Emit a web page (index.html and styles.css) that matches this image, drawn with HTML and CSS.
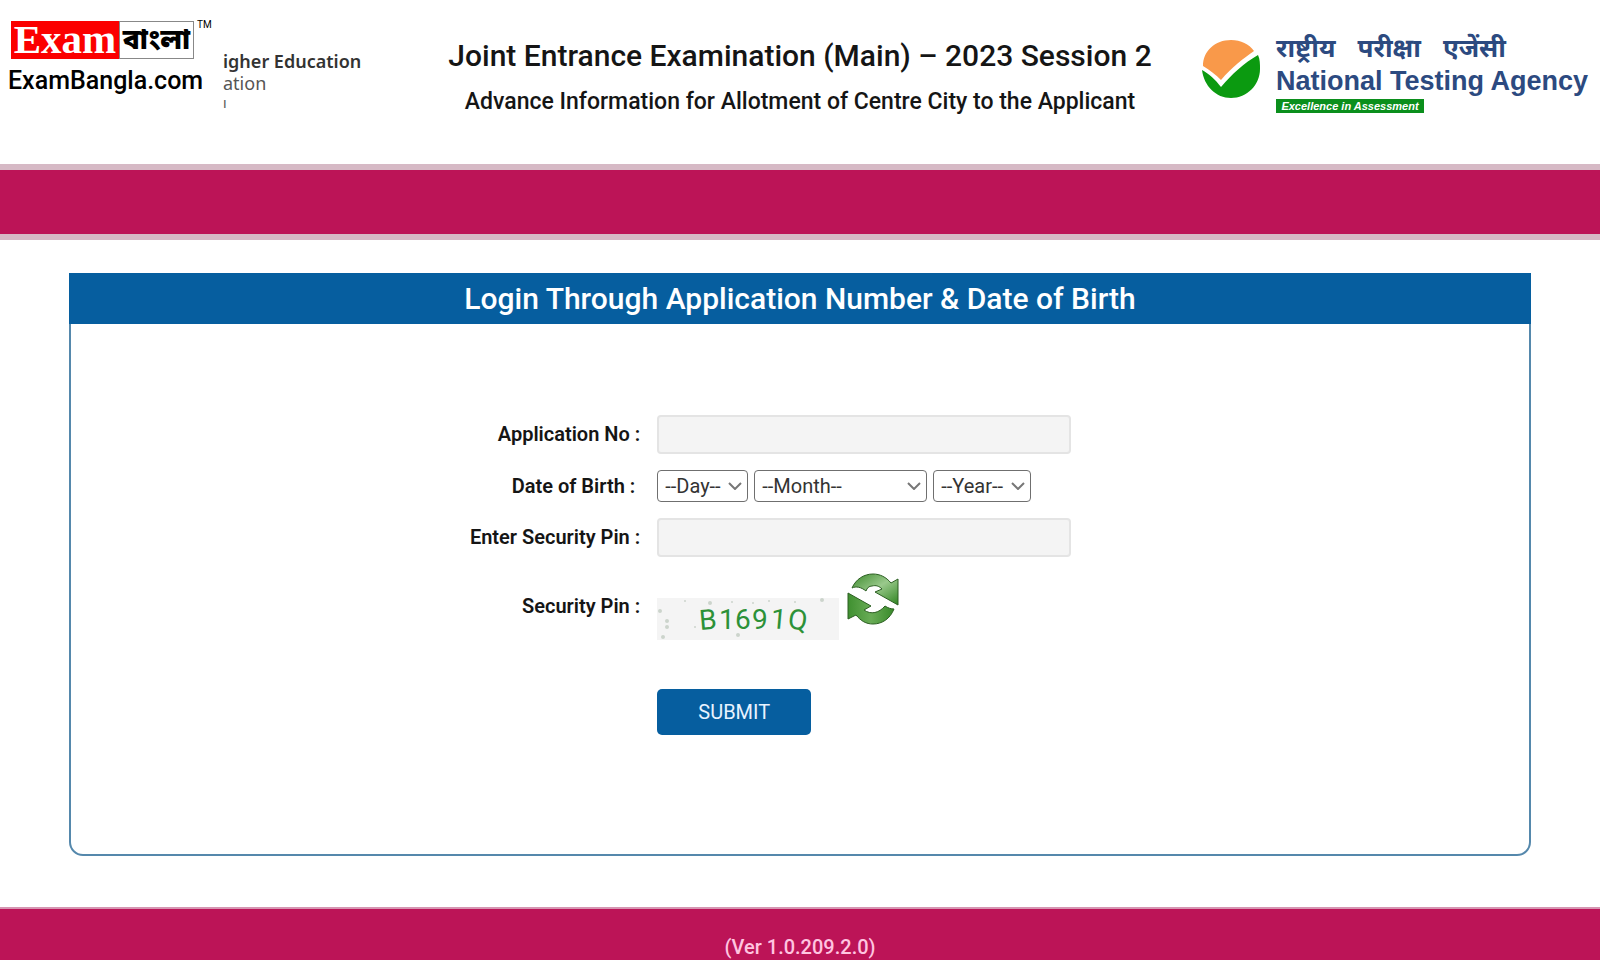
FILE: index.html
```html
<!DOCTYPE html>
<html lang="en">
<head>
<meta charset="utf-8">
<title>Joint Entrance Examination (Main) – 2023 Session 2</title>
<link rel="stylesheet" href="styles.css">
</head>
<body>
<header class="header">
  <div class="header-left">
    <div class="brand">
      <div class="brand-top">
        <span class="brand-exam">Exam</span>
        <span class="brand-bangla" lang="bn">বাংলা</span>
        <span class="brand-tm">TM</span>
      </div>
      <div class="brand-site">ExamBangla.com</div>
    </div>
    <div class="dept">
      <div class="dept-main">igher Education</div>
      <div class="dept-line">ation</div>
      <div class="dept-last">ı</div>
    </div>
  </div>
  <div class="header-title">
    <h1 class="title">Joint Entrance Examination (Main) – 2023 Session 2</h1>
    <p class="subtitle">Advance Information for Allotment of Centre City to the Applicant</p>
  </div>
  <div class="nta">
    <svg class="nta-mark" viewBox="0 0 60 60" width="60" height="60" aria-hidden="true">
      <path fill="#f9994a" d="M2 27C2 12 14 1 30 1c10 0 18 4 23 11C43 19 31 28 20 41C15 36 9 31 2 27Z"/>
      <path fill="#0b9a10" d="M1 31c7 4 13 9 19 17C31 35 43 24 57 16c2 4 2 9 2 14c0 16-13 29-29 29C15 59 3 47 1 31Z"/>
    </svg>
    <div class="nta-text">
      <div class="nta-hindi" lang="hi"><span>राष्ट्रीय</span> <span>परीक्षा</span> <span>एजेंसी</span></div>
      <div class="nta-name">National Testing Agency</div>
      <div class="nta-tag">Excellence in Assessment</div>
    </div>
  </div>
</header>
<div class="band"></div>
<main class="main">
  <section class="card">
    <h2 class="card-title">Login Through Application Number &amp; Date of Birth</h2>
    <form class="form">
      <label class="label" for="appno">Application No :</label>
      <input class="field" id="appno" type="text">
      <label class="label label-dob" for="day">Date of Birth :</label>
      <div class="dob">
        <div class="pick pick-day"><select class="select" id="day"><option>--Day--</option></select><svg class="chevron" viewBox="0 0 14 8" width="14" height="8"><path d="M1 1l6 6l6-6"/></svg></div>
        <div class="pick pick-month"><select class="select" aria-label="Month"><option>--Month--</option></select><svg class="chevron" viewBox="0 0 14 8" width="14" height="8"><path d="M1 1l6 6l6-6"/></svg></div>
        <div class="pick pick-year"><select class="select" aria-label="Year"><option>--Year--</option></select><svg class="chevron" viewBox="0 0 14 8" width="14" height="8"><path d="M1 1l6 6l6-6"/></svg></div>
      </div>
      <label class="label" for="pin">Enter Security Pin :</label>
      <input class="field" id="pin" type="text">
      <span class="label label-pin">Security Pin :</span>
      <div class="captcha-row">
        <svg class="captcha" viewBox="0 0 182 42" width="182" height="42" role="img" aria-label="Security pin">
          <rect width="182" height="42" fill="#f4f4f4"/>
          <g fill="#ccd4cc">
            <circle cx="3" cy="13" r="2"/><circle cx="10" cy="23" r="2"/><circle cx="10" cy="29" r="2"/><circle cx="6" cy="39" r="2"/>
            <circle cx="53" cy="5" r="2"/><circle cx="81" cy="37" r="2"/><circle cx="165" cy="2" r="2"/><circle cx="38" cy="29" r="1"/>
            <circle cx="75" cy="4" r="1"/><circle cx="96" cy="5" r="1"/><circle cx="112" cy="3" r="1"/><circle cx="138" cy="4" r="1"/><circle cx="28" cy="3" r="1"/>
          </g>
          <g class="captcha-text">
            <text x="43" y="32" rotate="-5">B</text><text x="62" y="31">1</text><text x="78" y="31">6</text><text x="95" y="31">9</text><text x="113" y="30" rotate="5">1</text><text x="130" y="30" rotate="8">Q</text>
          </g>
        </svg>
        <button class="refresh" type="button" aria-label="Refresh security pin">
          <svg viewBox="0 0 52 52" width="52" height="52">
            <defs>
              <linearGradient id="leaf" x1="0" y1="0" x2="1" y2="1">
                <stop offset="0" stop-color="#3c8a2c"/><stop offset="0.5" stop-color="#9ac98c"/><stop offset="1" stop-color="#2f8420"/>
              </linearGradient>
              <linearGradient id="stem" x1="0" y1="0" x2="1" y2="0">
                <stop offset="0" stop-color="#3f9030"/><stop offset="0.5" stop-color="#69ac56"/><stop offset="1" stop-color="#388a2a"/>
              </linearGradient>
            </defs>
            <path fill="url(#leaf)" stroke="#2c5f22" d="M5 15C9 6 17 1 26 1c7 0 13 3 18 9l7-4v26L28 19l7-3c-3-3-6-4-10-3c-3 0-5 2-6 5C14 14 9 13 5 15Z"/>
            <path fill="url(#stem)" stroke="#2c5f22" d="M1 20L24 33l-7 4c7 5 15 3 21-4c3 2 6 3 9 3C43 46 35 51 26 51c-7 0-12-3-17-9l-8 4Z"/>
          </svg>
        </button>
      </div>
      <button class="submit" type="submit">SUBMIT</button>
    </form>
  </section>
</main>
<footer class="footer">(Ver 1.0.209.2.0)</footer>
</body>
</html>
```
FILE: styles.css
```css
* { box-sizing: border-box; }

body {
  margin: 0;
  min-height: 100vh;
  display: flex;
  flex-direction: column;
  background: #fff;
  color: #151515;
  font-family: Roboto, "Liberation Sans", sans-serif;
}

.header {
  display: grid;
  grid-template-columns: 1fr auto 1fr;
  align-items: start;
  min-height: 164px;
  padding: 20px 8px 0;
}

.header-left { display: flex; }
.brand { width: 215px; color: #000; }
.brand-top { display: flex; align-items: flex-start; padding: 1px 0 0 3px; }
.brand-exam {
  width: 108px;
  height: 38px;
  background: #fb0000;
  color: #fff;
  font: bold 41px/37px "Liberation Serif", serif;
  text-align: center;
}
.brand-bangla {
  width: 75px;
  height: 38px;
  border: 1px solid #888;
  font: 900 28px/40px "Noto Sans Bengali", "Noto Sans", sans-serif;
  text-align: center;
}
.brand-tm { padding-left: 3px; font-size: 10px; line-height: 8px; }
.brand-site { padding-top: 6px; font-size: 25px; line-height: 32px; font-weight: 500; }

.dept {
  padding-top: 29px;
  font: 18px/24px "Noto Sans", sans-serif;
  color: #555;
}
.dept-main { color: #333; font-weight: 600; }
.dept-line { line-height: 20px; }
.dept-last { font-size: 14px; line-height: 20px; }

.header-title { padding-top: 18px; text-align: center; }
.title { margin: 0; font-size: 30px; line-height: 36px; font-weight: 500; }
.subtitle { margin: 14px 0 0; font-size: 23px; line-height: 28px; font-weight: 500; }

.nta { display: flex; justify-content: flex-end; gap: 15px; padding-top: 19px; }
.nta-text { min-width: 316px; color: #2c4a80; }
.nta-hindi {
  display: flex;
  gap: 22px;
  font: bold 26px/24px "Noto Sans Devanagari", "Noto Sans", sans-serif;
  white-space: nowrap;
}
.nta-name { font: bold 27px/32px "Liberation Sans", sans-serif; padding-top: 2px; white-space: nowrap; }
.nta-tag {
  width: 148px;
  margin-top: 2px;
  background: #0b8f1c;
  color: #fff;
  font: italic bold 11px/14px "Liberation Sans", sans-serif;
  text-align: center;
  white-space: nowrap;
}

.band {
  height: 76px;
  border: solid #d6b9c5;
  border-width: 6px 0;
  background: #bc1457;
}

.main { flex: 1; padding: 33px 69px 51px; }
.card {
  min-height: 583px;
  border: 2px solid #5588ac;
  border-radius: 0 0 14px 14px;
}
.card-title {
  margin: -2px -2px 0;
  background: #065e9f;
  color: #fff;
  font-size: 30px;
  line-height: 51px;
  font-weight: 500;
  text-align: center;
}

.form {
  display: grid;
  grid-template-columns: 39% 1fr;
  column-gap: 17px;
  padding: 91px 0 0 1px;
}
.label {
  font-size: 20px;
  line-height: 38px;
  font-weight: 600;
  text-align: right;
}
.label-dob { padding: 13px 5px 0 0; }
.label-pin { padding-top: 30px; }
.field {
  width: 414px;
  height: 39px;
  padding: 0 10px;
  border: 2px solid #e4e4e4;
  border-radius: 4px;
  background: #f4f4f4;
  font: 20px Roboto, sans-serif;
}

.dob { display: flex; gap: 6px; padding: 16px 0; }
.pick { position: relative; }
.pick-day { width: 91px; }
.pick-month { width: 173px; }
.pick-year { width: 98px; }
.select {
  display: block;
  width: 100%;
  height: 32px;
  padding: 0 0 0 7px;
  appearance: none;
  border: 1px solid #6f6f6f;
  border-radius: 4px;
  background: #fff;
  color: #333;
  font: 20px/28px Roboto, sans-serif;
}
.chevron {
  position: absolute;
  top: 12px;
  right: 6px;
  fill: none;
  stroke: #777;
  stroke-width: 2;
  pointer-events: none;
}

.captcha-row { display: flex; gap: 8px; padding-top: 16px; }
.captcha { margin-top: 25px; }
.captcha-text { fill: #2c9138; font: 28px Roboto, sans-serif; }
.refresh { height: 52px; padding: 0; border: 0; background: none; }

.submit {
  grid-column: 2;
  width: 154px;
  height: 46px;
  margin-top: 49px;
  padding-bottom: 2px;
  border: 0;
  border-radius: 5px;
  background: #065e9f;
  color: #e8f3ff;
  font: 20px Roboto, sans-serif;
}

.footer {
  min-height: 53px;
  border-top: 2px solid #d695b2;
  background: #bc1457;
  color: #ffc4e0;
  font-size: 20px;
  line-height: 24px;
  font-weight: 500;
  padding-top: 26px;
  text-align: center;
}
```
